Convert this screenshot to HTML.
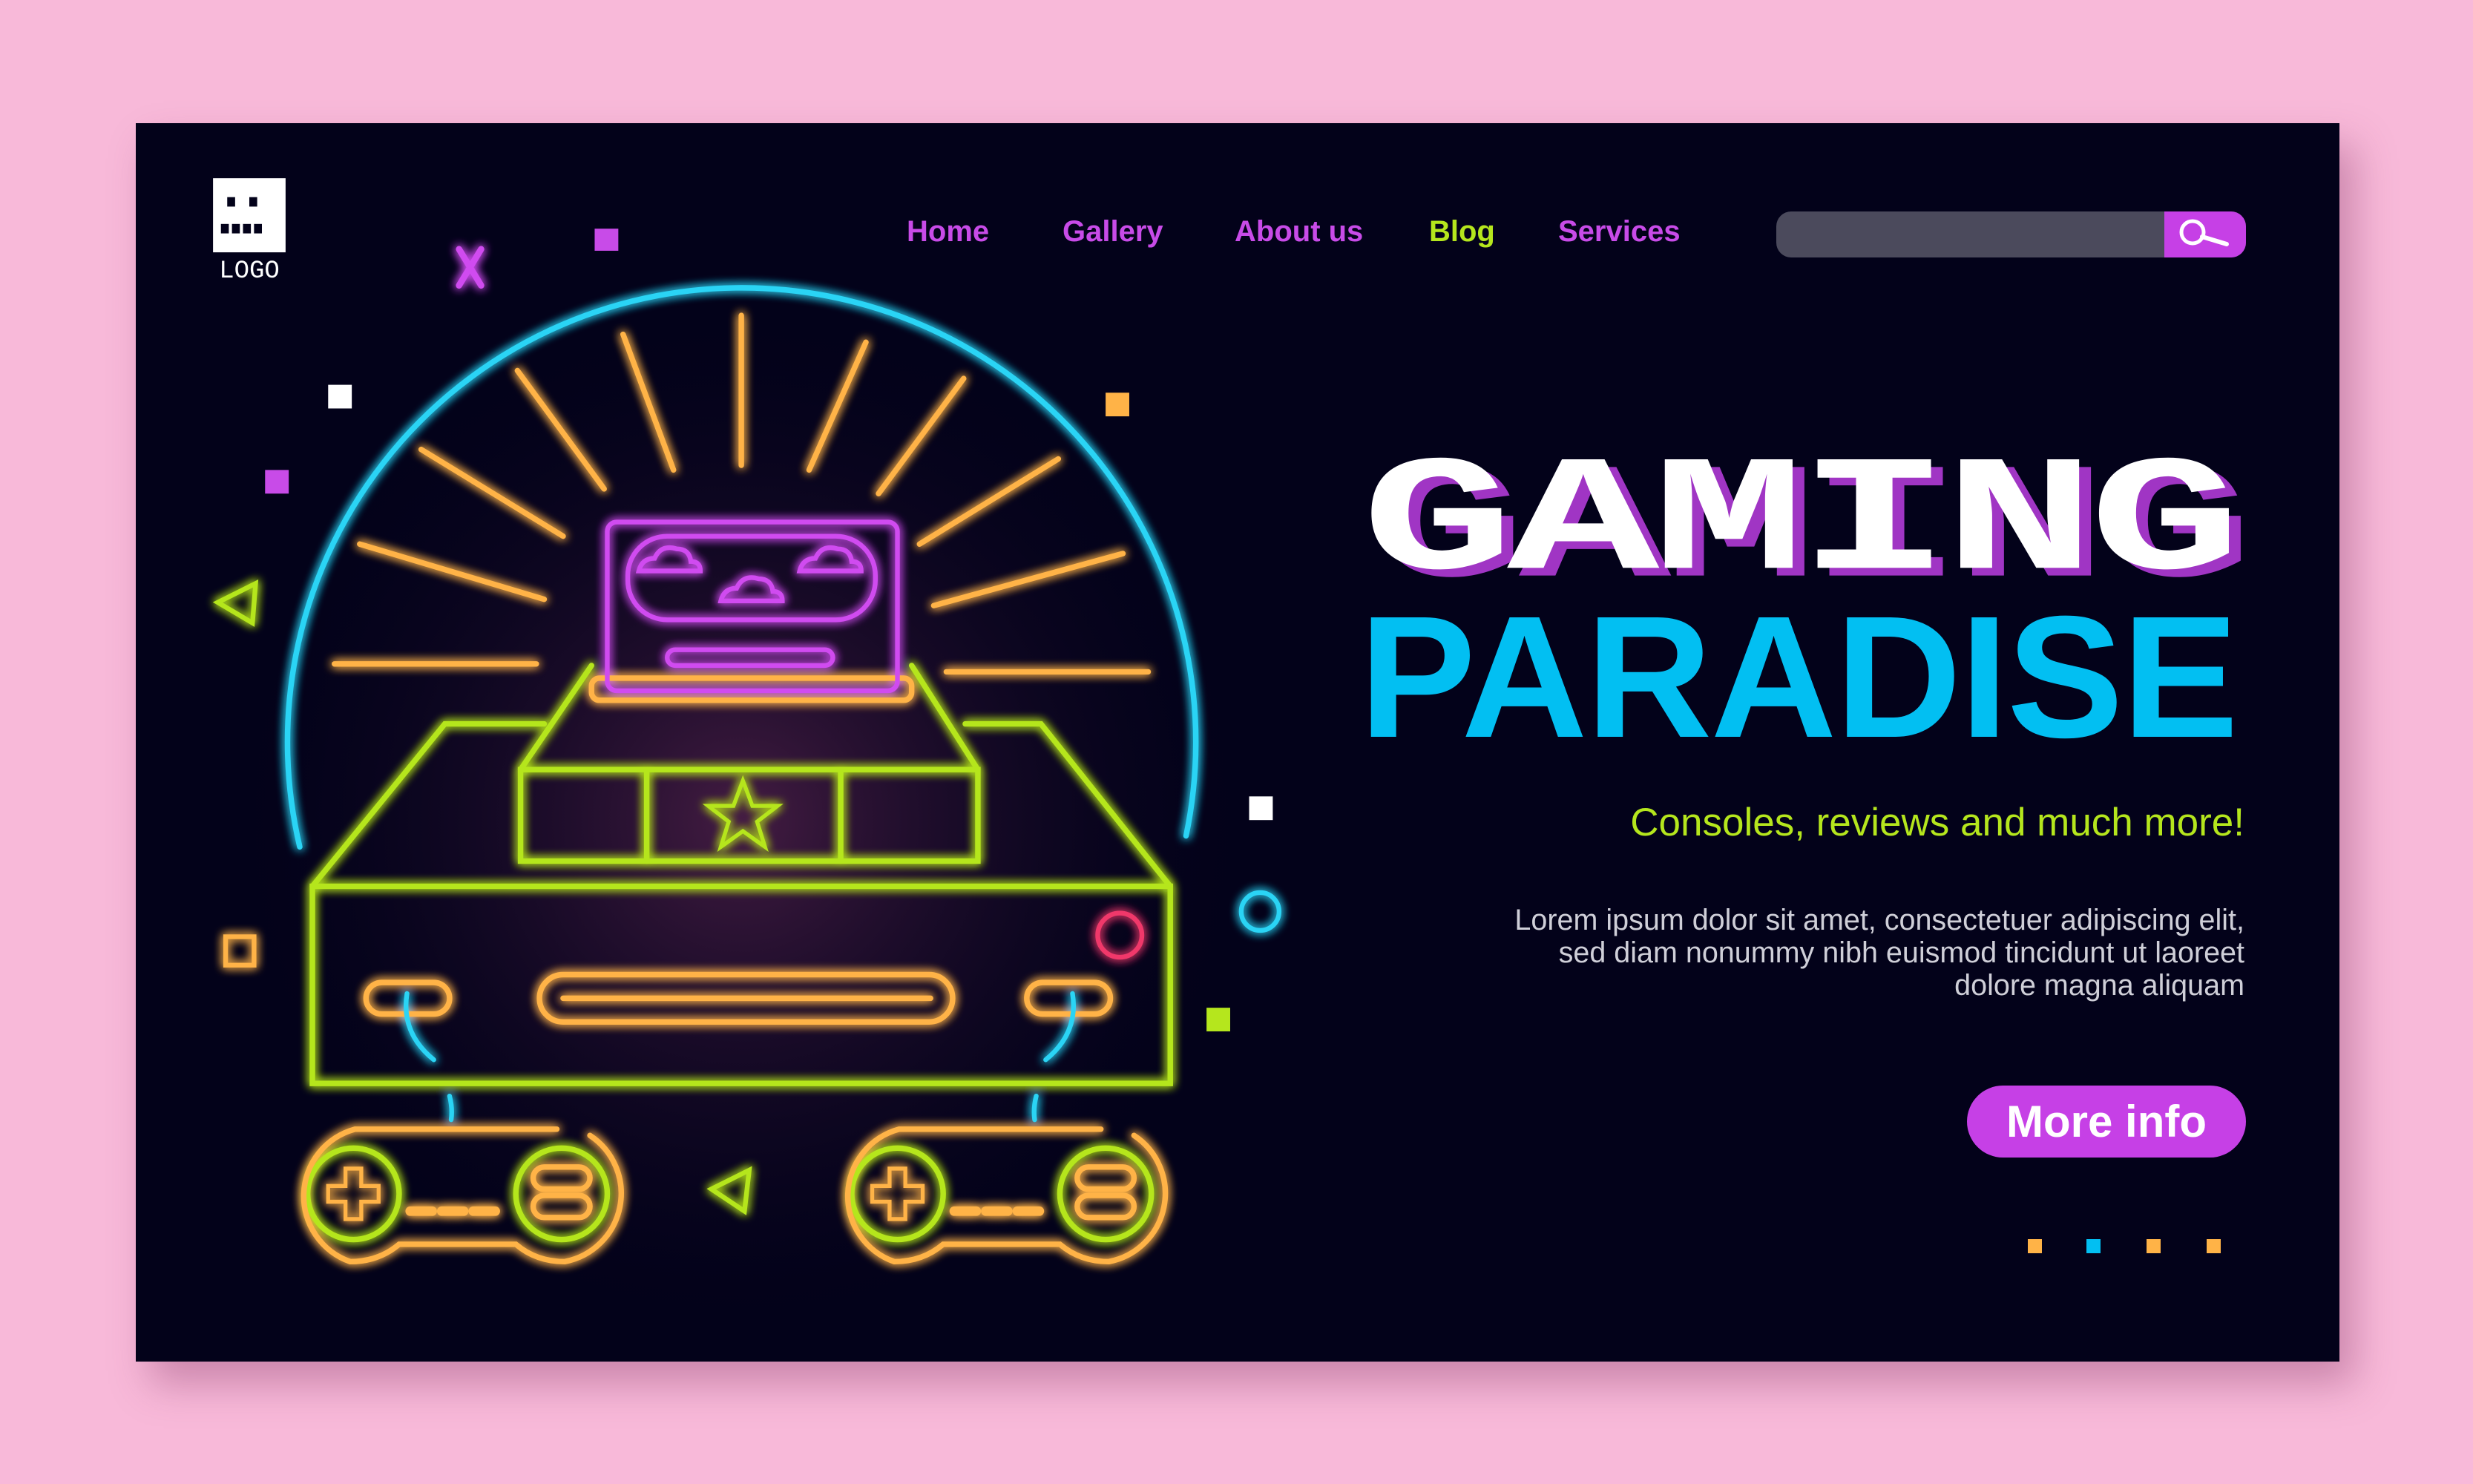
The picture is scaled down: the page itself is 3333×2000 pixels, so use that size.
<!DOCTYPE html>
<html><head><meta charset="utf-8"><style>
html,body{margin:0;padding:0}
body{width:3333px;height:2000px;background:#f8b9d9;position:relative;overflow:hidden;font-family:"Liberation Sans",sans-serif}
#panel{position:absolute;left:183px;top:166px;width:2970px;height:1669px;background:#03021a;box-shadow:20px 30px 50px rgba(120,40,90,.35)}
svg.ill{position:absolute;left:0;top:0;width:3333px;height:2000px}
.nav{position:absolute;top:290px;font-weight:bold;font-size:40px;color:#c84be8}
.search{position:absolute;left:2394px;top:285px;width:633px;height:62px;border-radius:20px;background:#4b4a5c;overflow:hidden}
.search .btn{position:absolute;right:0;top:0;width:110px;height:62px;background:#c640e6;border-radius:0 16px 16px 0}
.gaming{position:absolute;left:1835px;top:618px;font-family:"Liberation Mono",monospace;font-weight:bold;font-size:300px;line-height:240px;color:#fff;text-shadow:14px 14px 0 #a035c4;transform-origin:0 0;transform:scale(1.14,0.74);letter-spacing:-8px}
.paradise{position:absolute;left:1832px;top:782px;font-weight:bold;font-size:234px;line-height:260px;color:#02bff2;transform-origin:0 0;transform:scaleX(1.006);letter-spacing:-2px}
.sub{position:absolute;right:308px;top:1078px;font-size:53px;color:#b5e61d}
.lorem{position:absolute;right:308px;top:1218px;font-size:39.5px;line-height:44px;color:#cfcfd8;text-align:right}
.more{position:absolute;left:2651px;top:1463px;width:376px;height:97px;border-radius:49px;background:#c640e6;color:#fff;font-weight:bold;font-size:60px;line-height:97px;text-align:center}
.dot{position:absolute;top:1670px;width:19px;height:19px}
</style></head><body>
<div id="panel"></div>
<svg class="ill" viewBox="0 0 1568 941" xmlns="http://www.w3.org/2000/svg">
<defs>
<filter id="g" x="-50%" y="-50%" width="200%" height="200%"><feGaussianBlur stdDeviation="3" result="b"/><feMerge><feMergeNode in="b"/><feMergeNode in="b"/><feMergeNode in="SourceGraphic"/></feMerge></filter>
<radialGradient id="rg" cx="0.5" cy="0.5" r="0.5"><stop offset="0" stop-color="#5a2550" stop-opacity=".75"/><stop offset="1" stop-color="#03021a" stop-opacity="0"/></radialGradient>
</defs>
<ellipse cx="470" cy="520" rx="330" ry="330" fill="url(#rg)"/>
<rect x="135" y="113" width="46" height="47" fill="#fff"/>
<rect x="144" y="125" width="5" height="6" fill="#03021a"/><rect x="158" y="125" width="5" height="6" fill="#03021a"/>
<rect x="140" y="142" width="5" height="6" fill="#03021a"/><rect x="147" y="142" width="5" height="6" fill="#03021a"/><rect x="154" y="142" width="5" height="6" fill="#03021a"/><rect x="161" y="142" width="5" height="6" fill="#03021a"/>
<text x="158" y="176" font-family="Liberation Mono" font-size="16" fill="#fff" text-anchor="middle">LOGO</text>
<g filter="url(#g)" fill="none" stroke-linecap="round">
<path d="M190 537 A288 288 0 1 1 752 530" stroke="#2ad4f5" stroke-width="3.5"/>
<g stroke="#ffb347" stroke-width="3.5">
<line x1="470" y1="200" x2="470" y2="295"/><line x1="395" y1="212" x2="427" y2="298"/><line x1="328" y1="235" x2="383" y2="310"/><line x1="267" y1="285" x2="357" y2="340"/><line x1="228" y1="345" x2="345" y2="380"/><line x1="212" y1="421" x2="340" y2="421"/>
<line x1="549" y1="217" x2="513" y2="298"/><line x1="611" y1="240" x2="557" y2="313"/><line x1="671" y1="291" x2="583" y2="345"/><line x1="712" y1="351" x2="592" y2="384"/><line x1="728" y1="426" x2="600" y2="426"/>
<rect x="375" y="430" width="203" height="14" rx="5"/>
<rect x="232" y="623" width="53" height="20" rx="10"/><rect x="651" y="623" width="53" height="20" rx="10"/>
<rect x="342" y="618" width="262" height="30" rx="15"/><line x1="357" y1="633" x2="590" y2="633"/>
</g>
<g stroke="#d04cf0" stroke-width="3">
<rect x="385" y="331" width="184" height="107" rx="6"/><rect x="398" y="340" width="157" height="53" rx="25"/><rect x="423" y="412" width="105" height="10" rx="5"/>
<path d="M405 362 q2-8 10-8 q4-9 14-6 q8 0 9 8 q6 0 6 6 z M457 381 q2-8 10-8 q4-9 14-6 q8 0 9 8 q6 0 6 6 z M507 362 q2-8 10-8 q4-9 14-6 q8 0 9 8 q6 0 6 6 z"/>
<path d="M291 158 l14 23 M305 158 l-14 23" stroke-width="4"/>
</g>
<g stroke="#b5e61d" stroke-width="3.5">
<path d="M198 562 L282 459 L345 459 M330 488 L375 422 M620 488 L578 422 M612 459 L660 459 L742 562"/>
<rect x="330" y="488" width="290" height="58"/><line x1="410" y1="488" x2="410" y2="546"/><line x1="533" y1="488" x2="533" y2="546"/>
<path d="M471 495 l6 16 h16 l-13 10 l5 16 l-14-10 l-14 10 l5-16 l-13-10 h16 z" stroke-width="2.5"/>
<rect x="198" y="562" width="544" height="125"/>
<path d="M162 370 L138 382 L160 395 Z M475 742 L451 754 L472 768 Z" stroke-width="3"/>
<circle cx="224" cy="757" r="29"/><circle cx="356" cy="757" r="29"/><circle cx="569" cy="757" r="29"/><circle cx="701" cy="757" r="29"/>
</g>
<g stroke="#2ad4f5" stroke-width="3">
<path d="M258 630 q-4 25 17 42 M680 630 q4 25-17 42 M285 695 q2 8 1 15 M657 695 q-2 8-1 15"/>
<circle cx="799" cy="578" r="12"/>
</g>
<circle cx="710" cy="593" r="14" stroke="#f0386b" stroke-width="3"/>
<rect x="143" y="594" width="18" height="18" stroke="#ffb347" stroke-width="3"/>
<g stroke="#ffb347" stroke-width="3.5">
<path d="M353 716 H225 A44 44 0 0 0 222 800 Q240 800 253 789 H327 Q340 800 358 800 A44 44 0 0 0 374 720"/>
<path d="M698 716 H570 A44 44 0 0 0 567 800 Q585 800 598 789 H672 Q685 800 703 800 A44 44 0 0 0 719 720"/>
<path d="M219 741 h10 v11 h11 v10 h-11 v11 h-10 v-11 h-11 v-10 h11 z M564 741 h10 v11 h11 v10 h-11 v11 h-10 v-11 h-11 v-10 h11 z" stroke-width="2.5"/>
<rect x="338" y="740" width="36" height="14" rx="7"/><rect x="338" y="758" width="36" height="14" rx="7"/>
<rect x="683" y="740" width="36" height="14" rx="7"/><rect x="683" y="758" width="36" height="14" rx="7"/>
<path d="M260 768 h56 M605 768 h56" stroke-width="6" stroke-dasharray="14 6"/>
</g>
</g>
<rect x="377" y="145" width="15" height="14" fill="#c84be8"/>
<rect x="208" y="244" width="15" height="15" fill="#fff"/>
<rect x="168" y="298" width="15" height="15" fill="#c84be8"/>
<rect x="701" y="249" width="15" height="15" fill="#ffb347"/>
<rect x="792" y="505" width="15" height="15" fill="#fff"/>
<rect x="765" y="639" width="15" height="15" fill="#b5e61d"/>
</svg>
<div class="nav" style="left:1222px">Home</div>
<div class="nav" style="left:1432px">Gallery</div>
<div class="nav" style="left:1664px">About us</div>
<div class="nav" style="left:1926px;color:#b5e61d">Blog</div>
<div class="nav" style="left:2100px">Services</div>
<div class="search"><div class="btn"><svg width="110" height="62" viewBox="0 0 110 62"><circle cx="38" cy="28" r="15" fill="none" stroke="#fff" stroke-width="5"/><line x1="51" y1="34" x2="84" y2="44" stroke="#fff" stroke-width="6" stroke-linecap="round"/></svg></div></div>
<div class="gaming">GAMING</div>
<div class="paradise">PARADISE</div>
<div class="sub">Consoles, reviews and much more!</div>
<div class="lorem">Lorem ipsum dolor sit amet, consectetuer adipiscing elit,<br>sed diam nonummy nibh euismod tincidunt ut laoreet<br>dolore magna aliquam</div>
<div class="more">More info</div>
<div class="dot" style="left:2733px;background:#ffb347"></div>
<div class="dot" style="left:2812px;background:#02bff2"></div>
<div class="dot" style="left:2893px;background:#ffb347"></div>
<div class="dot" style="left:2974px;background:#ffb347"></div>
</body></html>
